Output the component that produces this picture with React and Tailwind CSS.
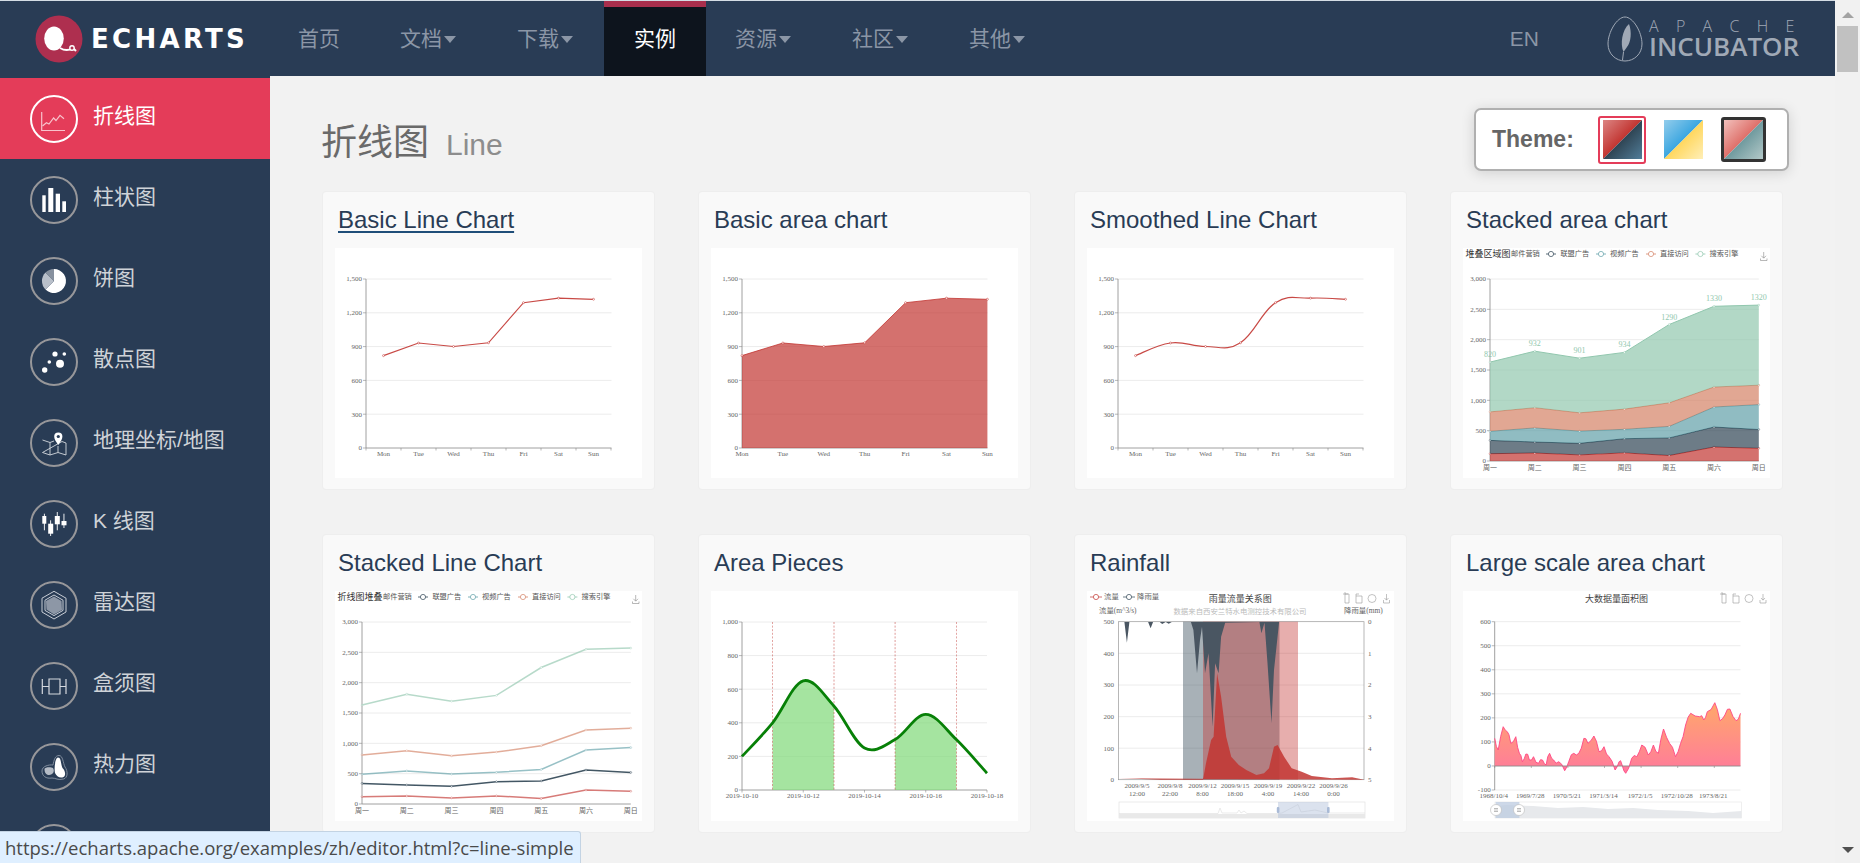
import React from "react";

const navItems = [
  { label: "首页", w: "w-[102px]" },
  { label: "文档", w: "w-[117px]", caret: true },
  { label: "下载", w: "w-[116px]", caret: true },
  { label: "实例", w: "w-[102px]", active: true },
  { label: "资源", w: "w-[117px]", caret: true },
  { label: "社区", w: "w-[117px]", caret: true },
  { label: "其他", w: "w-[117px]", caret: true },
];

const LINE = [820, 932, 901, 934, 1290, 1330, 1320];
const WEEK = ["周一", "周二", "周三", "周四", "周五", "周六", "周日"];
const STACK = [
  { name: "邮件营销", color: "#c23531", data: [120, 132, 101, 134, 90, 230, 210] },
  { name: "联盟广告", color: "#2f4554", data: [220, 182, 191, 234, 290, 330, 310] },
  { name: "视频广告", color: "#61a0a8", data: [150, 232, 201, 154, 190, 330, 410] },
  { name: "直接访问", color: "#d48265", data: [320, 332, 301, 334, 390, 330, 320] },
  { name: "搜索引擎", color: "#91c7ae", data: LINE },
];

function linePath(pts) {
  return pts.map((p, i) => (i ? "L" : "M") + p[0].toFixed(1) + " " + p[1].toFixed(1)).join(" ");
}

function smoothPath(pts, k = 0.2) {
  let d = `M${pts[0][0]} ${pts[0][1]}`;
  for (let i = 0; i < pts.length - 1; i++) {
    const a = pts[i - 1] || pts[i];
    const b = pts[i];
    const c = pts[i + 1];
    const e = pts[i + 2] || c;
    d += ` C${b[0] + (c[0] - a[0]) * k} ${b[1] + (c[1] - a[1]) * k} ${c[0] - (e[0] - b[0]) * k} ${c[1] - (e[1] - b[1]) * k} ${c[0]} ${c[1]}`;
  }
  return d;
}

function ChartSvg({ children }) {
  return (
    <svg width="307" height="230" viewBox="0 0 307 230" fontFamily="'Liberation Serif','Noto Sans CJK SC',serif" fontSize="7" fill="#666" className="block bg-white">
      {children}
    </svg>
  );
}

function Axes({ l, r, t, b, y, x, xY, lightBottom }) {
  const step = (b - t) / (y.length - 1);
  return (
    <g>
      {y.map((v, i) => (
        <g key={v}>
          {(i < y.length - 1 || lightBottom) && <line x1={l} x2={r} y1={t + i * step} y2={t + i * step} stroke="#ececec" />}
          <line x1={l - 3} x2={l} y1={t + i * step} y2={t + i * step} stroke="#888" strokeWidth="0.6" />
          <text x={l - 4} y={t + i * step + 2.4} textAnchor="end">{v}</text>
        </g>
      ))}
      <line x1={l} x2={l} y1={t} y2={b} stroke="#888" strokeWidth="0.8" />
      {!lightBottom && <line x1={l} x2={r} y1={b} y2={b} stroke="#888" strokeWidth="0.8" />}
      {x.map((item) => (
        <text key={item[1]} x={item[0]} y={xY} textAnchor="middle">{item[1]}</text>
      ))}
    </g>
  );
}

const SCALE_1500 = ["1,500", "1,200", "900", 600, 300, 0];
const SCALE_3000 = ["3,000", "2,500", "2,000", "1,500", "1,000", 500, 0];

function BasicLine({ smooth }) {
  const pts = LINE.map((v, i) => [48.5 + i * 35, 200 - (v / 1500) * 169]);
  const names = ["Mon", "Tue", "Wed", "Thu", "Fri", "Sat", "Sun"];
  return (
    <ChartSvg>
      <Axes l={31} r={276.5} t={31} b={200} y={SCALE_1500} x={names.map((n, i) => [48.5 + i * 35, n])} xY={208} />
      {[0, 1, 2, 3, 4, 5, 6, 7].map((i) => (
        <line key={i} x1={31 + i * 35} x2={31 + i * 35} y1={200} y2={202.5} stroke="#888" strokeWidth="0.6" />
      ))}
      <path d={smooth ? smoothPath(pts) : linePath(pts)} fill="none" stroke="#c23531" strokeWidth="1.2" opacity="0.9" />
      {pts.map((p) => (
        <circle key={p[0]} cx={p[0]} cy={p[1]} r="1" fill="#fff" stroke="#c23531" strokeWidth="0.5" />
      ))}
    </ChartSvg>
  );
}

function BasicArea() {
  const pts = LINE.map((v, i) => [31 + i * 40.9, 200 - (v / 1500) * 169]);
  const names = ["Mon", "Tue", "Wed", "Thu", "Fri", "Sat", "Sun"];
  return (
    <ChartSvg>
      <Axes l={31} r={276.5} t={31} b={200} y={SCALE_1500} x={names.map((n, i) => [31 + i * 40.9, n])} xY={208} />
      <path d={`${linePath(pts)} L276.4 200 L31 200 Z`} fill="#c23531" opacity="0.7" />
      <path d={linePath(pts)} fill="none" stroke="#c23531" strokeWidth="1" opacity="0.8" />
      {pts.map((p) => (
        <circle key={p[0]} cx={p[0]} cy={p[1]} r="1" fill="#fff" stroke="#c23531" strokeWidth="0.5" />
      ))}
    </ChartSvg>
  );
}

function Legend({ title }) {
  const xs = [[null, 48], [88, 97.4], [138, 147], [188, 197], [237.4, 246.6]];
  return (
    <g>
      {STACK.map((s, i) => (
        <g key={s.name}>
          {xs[i][0] && (
            <g>
              <line x1={xs[i][0] - 5} x2={xs[i][0] + 5} y1="6" y2="6" stroke={s.color} strokeWidth="0.8" />
              <circle cx={xs[i][0]} cy="6" r="2.6" fill="#fff" stroke={s.color} strokeWidth="0.7" />
            </g>
          )}
          <text x={xs[i][1]} y="8.4" fontSize="7.2" fill="#555">{s.name}</text>
        </g>
      ))}
      <text x="2.5" y="9.4" fontSize="9" fill="#333">{title}</text>
      <path d="M300.7 4 V10 M298.4 7.8 L300.7 10.2 L303 7.8 M297.5 10.5 V12.5 H304 V10.5" fill="none" stroke="#888" strokeWidth="0.6" />
    </g>
  );
}

function stackedPoints() {
  const sum = [0, 0, 0, 0, 0, 0, 0];
  return STACK.map((s) =>
    s.data.map((v, i) => {
      sum[i] += v;
      return [27 + i * 44.8, 213 - (sum[i] / 3000) * 182];
    })
  );
}

function StackedArea() {
  const layers = stackedPoints();
  return (
    <ChartSvg>
      <Axes l={27} r={295.8} t={31} b={213} y={SCALE_3000} x={WEEK.map((n, i) => [27 + i * 44.8, n])} xY={222} />
      {layers.map((pts, k) => {
        const below = k ? [...layers[k - 1]].reverse() : [[295.8, 213], [27, 213]];
        return (
          <g key={k}>
            <path d={`${linePath(pts)} ${below.map((p) => `L${p[0]} ${p[1]}`).join(" ")} Z`} fill={STACK[k].color} opacity="0.7" />
            <path d={linePath(pts)} fill="none" stroke={STACK[k].color} strokeWidth="1" />
            {pts.map((p) => (
              <circle key={p[0]} cx={p[0]} cy={p[1]} r="0.9" fill="#fff" stroke={STACK[k].color} strokeWidth="0.4" />
            ))}
          </g>
        );
      })}
      {layers[4].map((p, i) => (
        <text key={p[0]} x={p[0]} y={p[1] - 5} textAnchor="middle" fontSize="8" fill="#91c7ae">{LINE[i]}</text>
      ))}
      <Legend title="堆叠区域图" />
    </ChartSvg>
  );
}

function StackedLine() {
  const layers = stackedPoints();
  return (
    <ChartSvg>
      <Axes l={27} r={295.8} t={31} b={213} y={SCALE_3000} x={WEEK.map((n, i) => [27 + i * 44.8, n])} xY={222} />
      {layers.map((pts, k) => (
        <g key={k} opacity={k === 1 ? 0.9 : 0.65}>
          <path d={linePath(pts)} fill="none" stroke={STACK[k].color} strokeWidth="1.5" />
          {pts.map((p) => (
            <circle key={p[0]} cx={p[0]} cy={p[1]} r="0.9" fill="#fff" stroke={STACK[k].color} strokeWidth="0.5" />
          ))}
        </g>
      ))}
      <Legend title="折线图堆叠" />
    </ChartSvg>
  );
}

function AreaPieces() {
  const vals = [200, 400, 650, 500, 250, 300, 450, 300, 100];
  const pts = vals.map((v, i) => [31 + i * 30.62, 199 - (v / 1000) * 168]);
  const curve = smoothPath(pts, 0.17);
  const dates = ["2019-10-10", "2019-10-12", "2019-10-14", "2019-10-16", "2019-10-18"];
  return (
    <ChartSvg>
      <defs>
        <clipPath id="pieces">
          <rect x="61.6" y="31" width="61.3" height="168" />
          <rect x="184.1" y="31" width="61.3" height="168" />
        </clipPath>
      </defs>
      <Axes l={31} r={276} t={31} b={199} y={["1,000", 800, 600, 400, 200, 0]} x={dates.map((d, i) => [31 + i * 61.25, d])} xY={207} />
      {dates.map((d, i) => (
        <line key={d} x1={31 + i * 61.25} x2={31 + i * 61.25} y1="199" y2="201.5" stroke="#888" strokeWidth="0.6" />
      ))}
      <path d={`${curve} L276 199 L31 199 Z`} fill="#7fd877" opacity="0.7" clipPath="url(#pieces)" />
      {[61.6, 123, 184.1, 245.4].map((x) => (
        <line key={x} x1={x} x2={x} y1="31" y2="199" stroke="#c23531" strokeWidth="0.7" strokeDasharray="2 1.6" opacity="0.7" />
      ))}
      <path d={curve} fill="none" stroke="#078007" strokeWidth="2.8" />
    </ChartSvg>
  );
}

function Tools({ x0, x1, x2, x3 }) {
  const s = { fill: "none", stroke: "#999", strokeWidth: 0.6 };
  return (
    <g>
      <path d={`M${x0 - 3} 3 H${x0 + 2} M${x0 - 1} 1 V3 M${x0 - 1} 3 H${x0 + 3} V12 H${x0 - 1} V3`} {...s} />
      <path d={`M${x1 - 3} 5 H${x1 + 3} V12 H${x1 - 3} V3 H${x1}`} {...s} />
      <circle cx={x2} cy="7.5" r="4" {...s} />
      <path d={`M${x3} 3 V9 M${x3 - 2} 7 L${x3} 9.2 L${x3 + 2} 7 M${x3 - 3} 9 V12 H${x3 + 3} V9`} {...s} />
    </g>
  );
}

const rainMap = (p) => [p[0] / 1.985 - 17, p[1] / 3 - 61];

const RAIN = [
  [108, 276], [113, 338], [118, 276], [155, 276], [160, 295], [165, 276], [178, 276], [183, 282], [190, 276], [196, 281], [202, 276],
  [240, 276], [245, 300], [252, 430], [258, 330], [262, 290], [268, 430], [275, 370], [283, 590], [288, 400], [295, 430], [300, 320],
  [308, 278], [376, 276], [380, 310], [386, 278], [392, 400], [400, 580], [405, 420], [410, 350], [415, 276],
].map(rainMap);

const FLOW = [
  [96, 745], [130, 746], [180, 749], [264, 749], [270, 700], [280, 630], [285, 620], [292, 430], [300, 500], [310, 620], [320, 680],
  [335, 705], [350, 720], [370, 735], [385, 730], [395, 715], [405, 650], [412, 645], [425, 680], [440, 715], [460, 725], [480, 738],
  [520, 745], [560, 742], [584, 749],
].map(rainMap);

function Rainfall() {
  const ticks = [[50, "2009/9/5", "12:00"], [83, "2009/9/8", "22:00"], [115.5, "2009/9/12", "8:00"], [148, "2009/9/15", "18:00"], [181, "2009/9/19", "4:00"], [214, "2009/9/22", "14:00"], [246.5, "2009/9/26", "0:00"]];
  const gy = [30.7, 62.3, 94, 125.7, 157.2, 188.7];
  return (
    <ChartSvg>
      {gy.map((y, i) => (
        <g key={y}>
          {i > 0 && i < 5 && <line x1="31.4" x2="277" y1={y} y2={y} stroke="#ececec" />}
          <text x="27" y={y + 2.4} textAnchor="end">{500 - i * 100}</text>
          <text x="281" y={y + 2.4}>{i}</text>
        </g>
      ))}
      <rect x="31.4" y="30.7" width="245.6" height="158" fill="none" stroke="#999" strokeWidth="0.7" />
      <rect x="96" y="30.7" width="96.5" height="158" fill="#2f4554" opacity="0.42" />
      <rect x="116" y="30.7" width="95" height="158" fill="#c23531" opacity="0.4" />
      <path d={`${linePath(FLOW)} Z`} fill="#c23531" opacity="0.85" />
      <path d={`${linePath(RAIN)} Z`} fill="#4a5662" />
      {ticks.map((t) => (
        <g key={t[0]}>
          <text x={t[0]} y="197" textAnchor="middle">{t[1]}</text>
          <text x={t[0]} y="205" textAnchor="middle">{t[2]}</text>
        </g>
      ))}
      <line x1="3" x2="15" y1="6" y2="6" stroke="#c23531" strokeWidth="0.7" />
      <circle cx="9" cy="6" r="2.6" fill="#fff" stroke="#c23531" strokeWidth="0.7" />
      <text x="17" y="8.4" fontSize="7.4">流量</text>
      <line x1="36" x2="48" y1="6" y2="6" stroke="#2f4554" strokeWidth="0.7" />
      <circle cx="42" cy="6" r="2.6" fill="#fff" stroke="#2f4554" strokeWidth="0.7" />
      <text x="50" y="8.4" fontSize="7.4">降雨量</text>
      <text x="153.3" y="10.5" fontSize="9" textAnchor="middle" fill="#444">雨量流量关系图</text>
      <text x="153" y="23" fontSize="7.4" textAnchor="middle" fill="#bbb">数据来自西安兰特水电测控技术有限公司</text>
      <text x="12" y="22" fontSize="7.4">流量(m^3/s)</text>
      <text x="257" y="22" fontSize="7.4">降雨量(mm)</text>
      <Tools x0={259} x1={272} x2={285} x3={299.5} />
      <rect x="32" y="211" width="246" height="16" fill="#fff" stroke="#ddd" strokeWidth="0.6" />
      <rect x="32" y="223" width="246" height="4" fill="#e9e9e9" />
      <path d="M32 222.5 H131 L133 217 L135 222 H150 L152 219 L154 222 L157 220 L160 222.5 H191 L195 222 L211 213.5 L214 221 L228 219 L241 222 H278" fill="none" stroke="#ddd" strokeWidth="0.6" />
      <rect x="191" y="211" width="50.4" height="16" fill="#a9bad6" opacity="0.42" />
      <rect x="189.8" y="216" width="2.6" height="6" rx="1" fill="#a9bad6" />
      <rect x="240" y="216" width="2.6" height="6" rx="1" fill="#a9bad6" />
    </ChartSvg>
  );
}

const largeMap = (p) => [p[0] / 1.985 - 393, p[1] / 3 - 61];

const LARGE_BASE = [
  [843, 625], [850, 660], [860, 590], [868, 605], [875, 640], [885, 620], [892, 670], [898, 695], [905, 672], [912, 690], [920, 680], [930, 700],
  [938, 690], [945, 705], [952, 670], [960, 690], [970, 695], [982, 722], [990, 695], [1000, 670], [1010, 670], [1020, 625], [1028, 640], [1040, 618],
  [1050, 665], [1060, 650], [1070, 680], [1082, 720], [1090, 695], [1096, 705], [1103, 730], [1115, 685], [1125, 680], [1135, 645], [1148, 675], [1158, 645],
  [1168, 670], [1178, 597], [1190, 640], [1202, 680], [1212, 640], [1222, 585], [1232, 550], [1250, 560], [1258, 570], [1265, 545], [1280, 518], [1290, 572],
  [1300, 555], [1310, 537], [1322, 572], [1331, 550],
];

// the real series is noisy, so add a jittered midpoint between the hand-read points
const LARGE = LARGE_BASE.flatMap((p, i) => {
  const n = LARGE_BASE[i + 1];
  if (!n) return [p];
  return [p, [(p[0] + n[0]) / 2, (p[1] + n[1]) / 2 + [7, -6, 3, -8, 5][i % 5]]];
}).map(largeMap);

function LargeArea() {
  const dates = ["1968/10/4", "1969/7/28", "1970/5/21", "1971/3/14", "1972/1/5", "1972/10/28", "1973/8/21"];
  return (
    <ChartSvg>
      <defs>
        <linearGradient id="large" x1="0" y1="0" x2="0" y2="1">
          <stop offset="0" stopColor="#ffa86a" />
          <stop offset="1" stopColor="#ff7a9c" />
        </linearGradient>
        <clipPath id="aboveZero">
          <rect x="30" y="30" width="250" height="145" />
        </clipPath>
        <clipPath id="belowZero">
          <rect x="30" y="175" width="250" height="30" />
        </clipPath>
      </defs>
      <Axes lightBottom l={31.7} r={277.5} t={30.7} b={199} y={[600, 500, 400, 300, 200, 100, 0, -100]} x={dates.map((d, i) => [30.7 + i * 36.6, d])} xY={207} />
      <path d={`${linePath(LARGE)} L277.5 175 L31.7 175 Z`} fill="url(#large)" clipPath="url(#aboveZero)" />
      <path d={`${linePath(LARGE)} L277.5 175 L31.7 175 Z`} fill="#ff7a9c" clipPath="url(#belowZero)" />
      <path d={linePath(LARGE)} fill="none" stroke="#ff4683" strokeWidth="0.9" />
      <line x1="31.7" x2="277.5" y1="175" y2="175" stroke="#888" strokeWidth="0.8" />
      {dates.map((d, i) => (
        <line key={d} x1={31.7 + i * 36.6} x2={31.7 + i * 36.6} y1="175" y2="177" stroke="#888" strokeWidth="0.6" />
      ))}
      <text x="153.5" y="10.5" fontSize="9" textAnchor="middle" fill="#444">大数据量面积图</text>
      <Tools x0={260} x1={273} x2={286} x3={300} />
      <rect x="32" y="211" width="246.5" height="16" fill="#fff" stroke="#e4e4e4" strokeWidth="0.6" />
      <path d="M32 215 L44 214 L70 215 L95 217 L120 216 L145 218 L170 217 L195 219 L225 220 L250 222 L278.5 220 V227 H32 Z" fill="#e7e9ec" />
      <rect x="32.7" y="211" width="23.7" height="16" fill="#bccbe0" opacity="0.75" />
      {[33, 56].map((x) => (
        <g key={x}>
          <circle cx={x} cy="219" r="5.5" fill="#fff" stroke="#bbb" strokeWidth="0.6" />
          <line x1={x - 2} x2={x + 2} y1="217.8" y2="217.8" stroke="#777" strokeWidth="0.7" />
          <line x1={x - 2} x2={x + 2} y1="220.2" y2="220.2" stroke="#777" strokeWidth="0.7" />
        </g>
      ))}
    </ChartSvg>
  );
}

const cards = [
  { title: "Basic Line Chart", chart: <BasicLine />, hover: true },
  { title: "Basic area chart", chart: <BasicArea /> },
  { title: "Smoothed Line Chart", chart: <BasicLine smooth /> },
  { title: "Stacked area chart", chart: <StackedArea /> },
  { title: "Stacked Line Chart", chart: <StackedLine /> },
  { title: "Area Pieces", chart: <AreaPieces /> },
  { title: "Rainfall", chart: <Rainfall /> },
  { title: "Large scale area chart", chart: <LargeArea /> },
];

function IconLine() {
  return (
    <g fill="none" stroke="#f8c3cc" strokeWidth="1.2">
      <path d="M11.7 17 V35.5 H35" />
      <path d="M12.5 31 L16.4 27.7 L19 29 L23.6 23 L26 25.5 L30 20.3 L34 23.7" />
    </g>
  );
}

function IconBar() {
  return (
    <g fill="#fff">
      <rect x="12.3" y="19.3" width="3.4" height="16.7" />
      <rect x="18.3" y="12" width="5" height="24" />
      <rect x="25.7" y="17.7" width="4.3" height="18.3" />
      <rect x="32.3" y="25.3" width="3.7" height="10.7" />
    </g>
  );
}

function IconPie() {
  return (
    <g>
      <path d="M24 12 A12 12 0 1 1 15.5 32.5 L24 24 Z" fill="#fff" />
      <path d="M15.5 32.5 A12 12 0 0 1 15.5 15.5 L24 24 Z" fill="#b9c0ca" />
      <path d="M15.5 15.5 A12 12 0 0 1 24 12 V24 Z" fill="#87919f" />
    </g>
  );
}

function IconScatter() {
  return (
    <g fill="#fff">
      <circle cx="25" cy="16" r="2.6" />
      <circle cx="34.3" cy="16" r="1.8" />
      <circle cx="19.3" cy="24" r="1.8" />
      <circle cx="30" cy="25.7" r="4" />
      <circle cx="14.7" cy="32" r="2.7" />
    </g>
  );
}

function IconMap() {
  return (
    <g fill="none" stroke="#d4d8de" strokeWidth="0.9">
      <path d="M12.5 21 L20 23.5 L24 22 M32 22.5 L36 24 V36 L28 33.5 L20 36 L12.5 33.5 Z M20 23.5 V36 M28 27 V33.5" />
      <path d="M28.3 26 C25.5 22 24.2 20 24.2 17.5 A4.1 4.1 0 0 1 32.4 17.5 C32.4 20 31 22 28.3 26 Z" fill="#fff" stroke="none" />
      <circle cx="28.3" cy="17.5" r="1.6" fill="#293c55" stroke="none" />
    </g>
  );
}

function IconCandle() {
  return (
    <g fill="#fff">
      <rect x="13.9" y="13.7" width="0.9" height="16.6" />
      <rect x="12.3" y="16" width="4" height="7.7" />
      <rect x="20.2" y="20.3" width="0.9" height="15.7" />
      <rect x="18.2" y="23.7" width="5" height="10" />
      <rect x="26.8" y="12" width="0.9" height="18.3" />
      <rect x="24.8" y="16" width="5" height="8.3" />
      <rect x="33.5" y="13.7" width="0.9" height="14.3" />
      <rect x="31.5" y="21" width="5" height="4.3" />
    </g>
  );
}

function IconRadar() {
  return (
    <g>
      <polygon points="24,10.3 36,17.2 36,31 24,38 12,31 12,17.2" fill="none" stroke="#c9ced6" strokeWidth="1" />
      <polygon points="24,14 33,19.2 33,29.4 24,34.6 15,29.4 15,19.2" fill="none" stroke="#c9ced6" strokeWidth="1" />
      <polygon points="24,15.5 31.5,20 32,29 24,33.5 16.5,28.5 16,20" fill="#8d97a6" />
    </g>
  );
}

function IconBox() {
  return (
    <path d="M12.3 17 V32 M12.3 24.5 H19 M19 17 H30 V32 H19 Z M30 24.5 H36 M36 17 V32" fill="none" stroke="#d4d8de" strokeWidth="1.2" />
  );
}

function IconHeat() {
  return (
    <g>
      <path d="M12 28 C12 23 19 21.5 23 22 C24 17 25 12.5 29 12.5 C33 12.5 33 20 35 24 C38 28 38 35 33.5 36 C28 37.5 25.5 35 22 35 C16 36 12 33 12 28 Z" fill="none" stroke="#8995a5" strokeWidth="0.9" />
      <path d="M14.5 26 C14.5 24 21 23.5 23 25 C25 28 23 32 19 32 C16 32 14.5 29.5 14.5 26 Z" fill="#b5bcc6" />
      <path d="M28 14.5 C31.5 14.5 30.5 21 32.5 25 C35.5 28 36 32.5 33.5 34 C30 35.5 26.5 33.5 25 30 C24 26 25 14.5 28 14.5 Z" fill="#fff" />
    </g>
  );
}

const sideItems = [
  { label: "折线图", icon: <IconLine />, active: true },
  { label: "柱状图", icon: <IconBar /> },
  { label: "饼图", icon: <IconPie /> },
  { label: "散点图", icon: <IconScatter /> },
  { label: "地理坐标/地图", icon: <IconMap /> },
  { label: "K 线图", icon: <IconCandle /> },
  { label: "雷达图", icon: <IconRadar /> },
  { label: "盒须图", icon: <IconBox /> },
  { label: "热力图", icon: <IconHeat /> },
  { label: "", icon: null },
];

function SideItem({ item }) {
  return (
    <div className={`h-[81px] shrink-0 flex items-center pl-[30px] gap-[15px] text-[21px] ${item.active ? "bg-[#e43c59] text-white" : "text-[#cfd3d8]"}`}>
      <div className={`w-[48px] h-[48px] rounded-full border-2 ${item.active ? "border-white" : "border-[#97979a]"} relative`}>
        <svg width="48" height="48" viewBox="0 0 48 48" className="absolute -left-[2px] -top-[2px]">
          {item.icon}
        </svg>
      </div>
      <span className="pb-[6px]">{item.label}</span>
    </div>
  );
}

function Swatch({ id, tl, br }) {
  return (
    <svg width="39" height="39" viewBox="0 0 39 39" className="block">
      <defs>
        <linearGradient id={`${id}a`} x1="0" y1="0" x2="1" y2="1">
          <stop offset="0" stopColor={tl[0]} />
          <stop offset="0.5" stopColor={tl[1]} />
        </linearGradient>
        <linearGradient id={`${id}b`} x1="0" y1="0" x2="1" y2="1">
          <stop offset="0.5" stopColor={br[0]} />
          <stop offset="1" stopColor={br[1]} />
        </linearGradient>
      </defs>
      <polygon points="0,0 39,0 0,39" fill={`url(#${id}a)`} />
      <polygon points="39,0 39,39 0,39" fill={`url(#${id}b)`} />
    </svg>
  );
}

function ThemeBox() {
  return (
    <div className="mt-[32px] w-[315px] h-[63px] bg-white border-2 border-[#b0b0b0] rounded-[7px] shadow-[0_2px_14px_rgba(0,0,0,0.14)] flex items-center pl-[16px]">
      <span className="text-[23px] font-bold text-[#666] w-[106px]">Theme:</span>
      <div className="w-[48px] h-[48px] border-2 border-[#e43c59] rounded-[3px] flex items-center justify-center">
        <Swatch id="dark" tl={["#dc8583", "#c23531"]} br={["#2f4554", "#517d99"]} />
      </div>
      <div className="ml-[18px]">
        <Swatch id="light" tl={["#93cdec", "#3ba6e0"]} br={["#ffd75e", "#ffefb8"]} />
      </div>
      <div className="ml-[18px] w-[45px] h-[45px] border-[3px] border-[#333] rounded-[3px] overflow-hidden">
        <Swatch id="soft" tl={["#f2c0bc", "#de6f69"]} br={["#6f9a9e", "#b4c9c9"]} />
      </div>
    </div>
  );
}

function Card({ card }) {
  return (
    <div className="w-[331px] h-[297px] bg-[#f9f9f9] rounded-[3px] shadow-[0_0_2px_rgba(0,0,0,0.07)] px-[12px] pt-[12px]">
      <h2 className={`text-[24px] leading-[32px] pl-[3px] h-[44px] text-[#293c55] ${card.hover ? "underline decoration-[#1f4e79] underline-offset-[3px]" : ""}`}>{card.title}</h2>
      {card.chart}
    </div>
  );
}

function Logo() {
  return (
    <div className="w-[269px] pl-[35px] flex items-center">
      <svg width="48" height="48" viewBox="0 0 48 48" className="shrink-0">
        <circle cx="24" cy="24" r="23.5" fill="#ae2f4f" />
        <ellipse cx="19" cy="23.5" rx="9.8" ry="12" fill="#fff" />
        <path d="M25 33 C30 36 35 35 38 33 L41 36" fill="none" stroke="#fff" strokeWidth="2" />
        <circle cx="37" cy="33" r="2.2" fill="#ae2f4f" stroke="#fff" strokeWidth="1.4" />
      </svg>
      <span className="ml-[8px] font-['DejaVu_Sans'] font-bold text-[26px] leading-none tracking-[3.3px] text-white">ECHARTS</span>
    </div>
  );
}

function Incubator() {
  return (
    <div className="flex items-center w-[190px] ml-[68px] text-[#a0a9b6]">
      <svg width="36" height="46" viewBox="0 0 36 46" className="shrink-0">
        <path d="M18 1 C26 1 35 16 35 28 C35 38 27 45 18 45 C9 45 1 38 1 28 C1 16 10 1 18 1 Z" fill="none" stroke="#a0a9b6" strokeWidth="1" />
        <path d="M22 8 C25 16 24 26 20 31 L16.5 36 C13 28 15 14 22 8 Z" fill="#a0a9b6" />
        <path d="M16.5 36 L15.5 44" stroke="#a0a9b6" strokeWidth="1" />
      </svg>
      <div className="ml-[6px] flex flex-col font-['Open_Sans']">
        <span className="text-[16px] leading-[15px] font-light tracking-[17.3px] whitespace-nowrap">APACHE</span>
        <span className="text-[26px] leading-[25px] font-semibold whitespace-nowrap">INCUBATOR</span>
      </div>
    </div>
  );
}

export default function App() {
  return (
    <div className="h-[863px] w-full overflow-hidden relative flex bg-[#f2f2f2] font-['Liberation_Sans','Noto_Sans_CJK_SC',sans-serif]">
      <div className="w-[1835px] h-full flex flex-col">
        <div className="h-px bg-[#d5dde5] shrink-0" />
        <nav className="h-[75px] shrink-0 bg-[#293c55] flex items-stretch">
          <Logo />
          {navItems.map((n) => (
            <div key={n.label} className={`${n.w} flex items-center ${n.active ? "" : "pl-[29px]"}`}>
              {n.active ? (
                <div className="w-[102px] h-full bg-[#0d141d] border-t-[6px] border-[#a92f4d] flex items-center justify-center text-[21px] text-white pb-[6px]">{n.label}</div>
              ) : (
                <div className="flex items-center text-[21px] text-[#8b96a6]">
                  <span>{n.label}</span>
                  {n.caret && <span className="ml-[2px] mt-[2px] w-0 h-0 border-x-[6px] border-x-transparent border-t-[7px] border-t-[#8b96a6]" />}
                </div>
              )}
            </div>
          ))}
          <div className="ml-auto flex items-center pr-[38px]">
            <span className="text-[21px] text-[#8b96a6]">EN</span>
            <Incubator />
          </div>
        </nav>
        <div className="flex flex-1 min-h-0">
          <aside className="w-[270px] shrink-0 bg-[#293c55] pt-[2px] flex flex-col overflow-hidden">
            {sideItems.map((s, i) => (
              <SideItem key={i} item={s} />
            ))}
          </aside>
          <main className="flex-1 pl-[53px] pr-[46px] overflow-hidden">
            <div className="flex justify-between h-[116px]">
              <div className="pt-[44px] flex items-baseline h-fit -ml-[2px]">
                <h1 className="text-[36px] leading-[46px] text-[#6a6a6a]">折线图</h1>
                <span className="ml-[17px] text-[30px] text-[#8d8d8d]">Line</span>
              </div>
              <ThemeBox />
            </div>
            <div className="grid grid-cols-[repeat(4,331px)] gap-x-[45px] gap-y-[46px]">
              {cards.map((c) => (
                <Card key={c.title} card={c} />
              ))}
            </div>
          </main>
        </div>
      </div>
      <div className="w-[25px] h-full bg-[#f1f1f1] flex flex-col items-center shrink-0">
        <span className="mt-[12px] w-0 h-0 border-x-[6px] border-x-transparent border-b-[6px] border-b-[#a3a3a3]" />
        <div className="mt-[8px] w-[21px] h-[46px] bg-[#c1c1c1]" />
        <span className="mt-auto mb-[10px] w-0 h-0 border-x-[6px] border-x-transparent border-t-[6px] border-t-[#505050]" />
      </div>
      <div className="absolute left-0 bottom-0 h-[32px] w-[581px] bg-[#dfefff] border border-b-0 border-l-0 border-[#c3d3e3] rounded-tr-[3px] pl-[5px] flex items-center font-['Open_Sans'] text-[18.5px] text-[#4a4a4a] whitespace-nowrap">
        https://echarts.apache.org/examples/zh/editor.html?c=line-simple
      </div>
    </div>
  );
}
